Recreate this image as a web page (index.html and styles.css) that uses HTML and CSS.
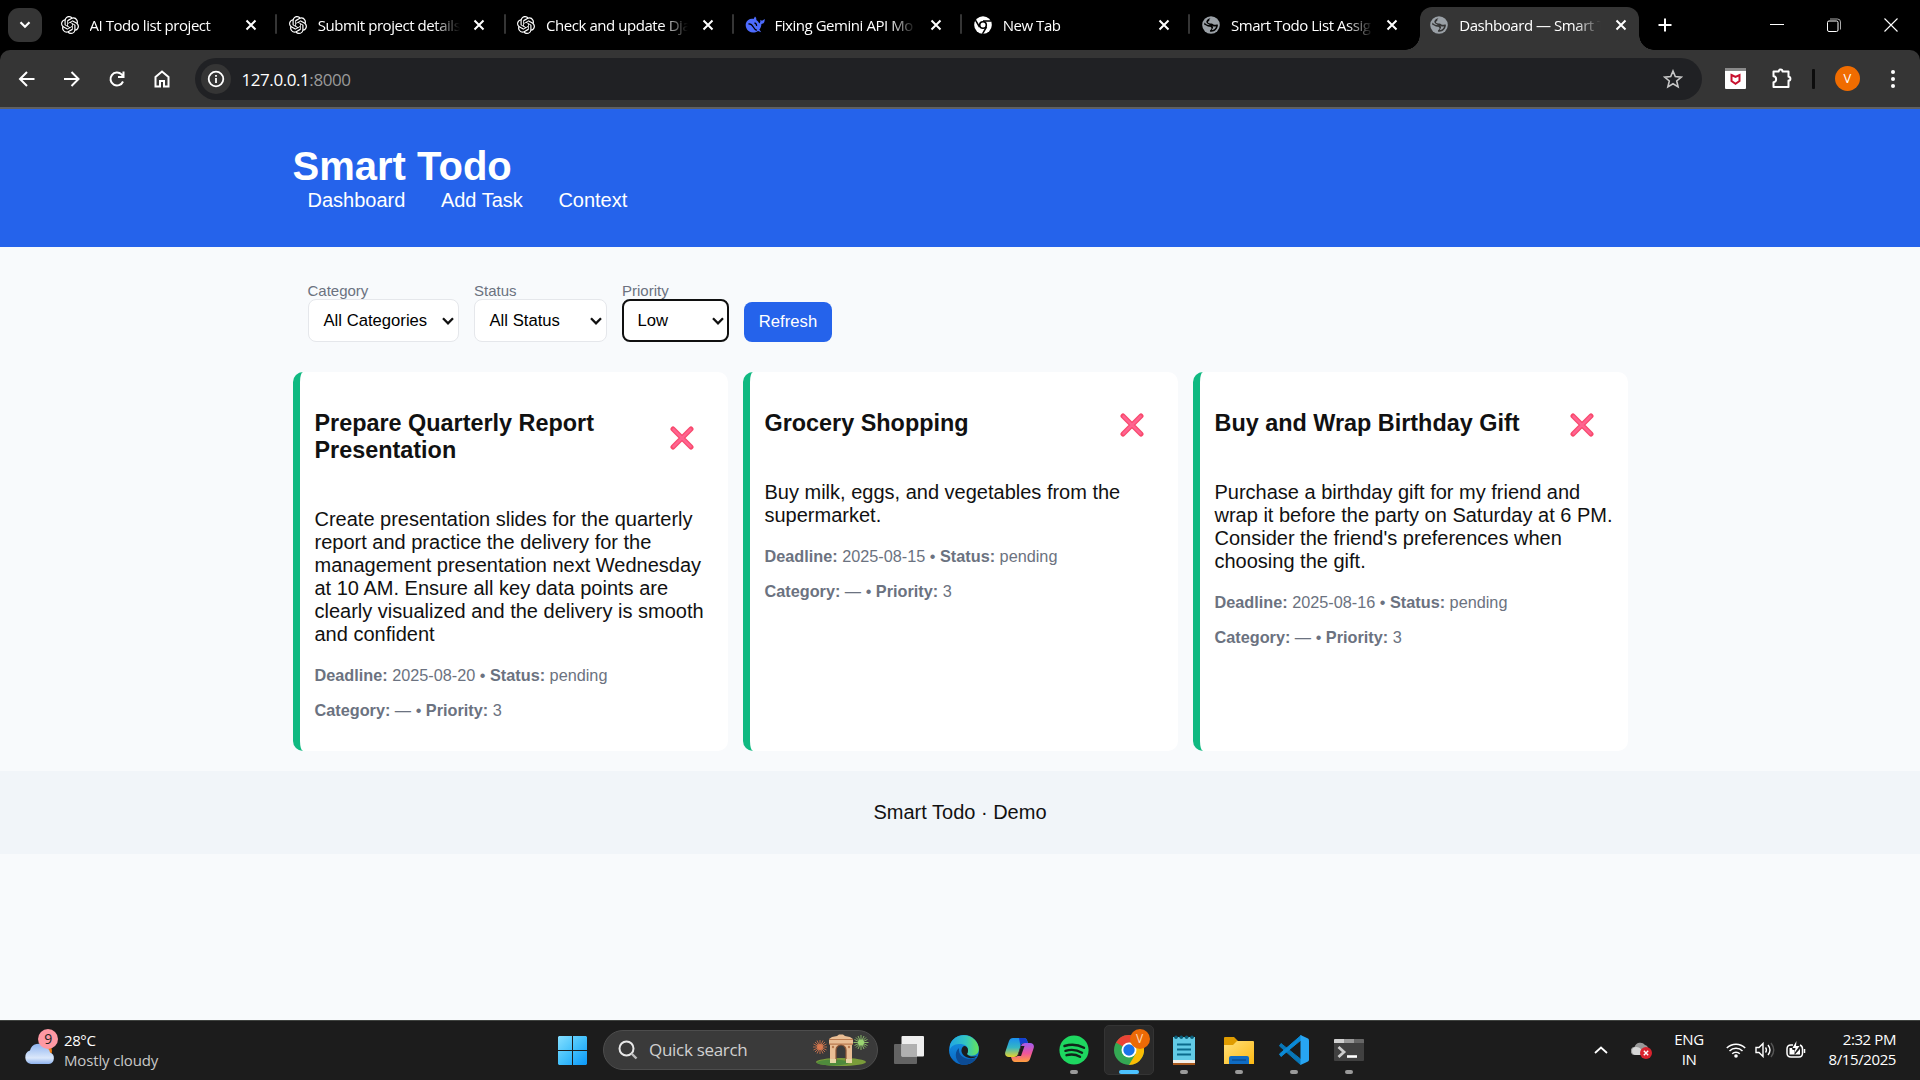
FILE: index.html
```html
<!DOCTYPE html>
<html lang="en">
<head>
<meta charset="utf-8">
<title>Dashboard — Smart Todo</title>
<link rel="stylesheet" href="styles.css">
</head>
<body>
<svg class="defs" aria-hidden="true">
  <symbol id="knot" viewBox="0 0 24 24"><path fill="#fff" d="M22.2819 9.8211a5.9847 5.9847 0 0 0-.5157-4.9108 6.0462 6.0462 0 0 0-6.5098-2.9A6.0651 6.0651 0 0 0 4.9807 4.1818a5.9847 5.9847 0 0 0-3.9977 2.9 6.0462 6.0462 0 0 0 .7427 7.0966 5.98 5.98 0 0 0 .511 4.9107 6.051 6.051 0 0 0 6.5146 2.9001A5.9847 5.9847 0 0 0 13.2599 24a6.0557 6.0557 0 0 0 5.7718-4.2058 5.9894 5.9894 0 0 0 3.9977-2.9001 6.0557 6.0557 0 0 0-.7475-7.0729zm-9.022 12.6081a4.4755 4.4755 0 0 1-2.8764-1.0408l.1419-.0804 4.7783-2.7582a.7948.7948 0 0 0 .3927-.6813v-6.7369l2.02 1.1686a.071.071 0 0 1 .038.052v5.5826a4.504 4.504 0 0 1-4.4945 4.4944zm-9.6607-4.1254a4.4708 4.4708 0 0 1-.5346-3.0137l.142.0852 4.783 2.7582a.7712.7712 0 0 0 .7806 0l5.8428-3.3685v2.3324a.0804.0804 0 0 1-.0332.0615L9.74 19.9502a4.4992 4.4992 0 0 1-6.1408-1.6464zM2.3408 7.8956a4.485 4.485 0 0 1 2.3655-1.9728V11.6a.7664.7664 0 0 0 .3879.6765l5.8144 3.3543-2.0201 1.1685a.0757.0757 0 0 1-.071 0l-4.8303-2.7865A4.504 4.504 0 0 1 2.3408 7.872zm16.5963 3.8558L13.1038 8.364 15.1192 7.2a.0757.0757 0 0 1 .071 0l4.8303 2.7913a4.4944 4.4944 0 0 1-.6765 8.1042v-5.6772a.79.79 0 0 0-.407-.667zm2.0107-3.0231l-.142-.0852-4.7735-2.7818a.7759.7759 0 0 0-.7854 0L9.409 9.2297V6.8974a.0662.0662 0 0 1 .0284-.0615l4.8303-2.7866a4.4992 4.4992 0 0 1 6.6802 4.66zM8.3065 12.863l-2.02-1.1638a.0804.0804 0 0 1-.038-.0567V6.0742a4.4992 4.4992 0 0 1 7.3757-3.4537l-.142.0805L8.704 5.459a.7948.7948 0 0 0-.3927.6813zm1.0976-2.3654l2.602-1.4998 2.6069 1.4998v2.9994l-2.5974 1.4997-2.6067-1.4997Z"/></symbol>
  <symbol id="globe" viewBox="0 0 18 18"><circle cx="9" cy="9" r="8.8" fill="#9aa0a6"/><path fill="var(--hole)" d="M9.500 2c-2 .3-2.200 1-2 2 .1 1-1.500 1-1.500 2.200C6 7.300 8 7.600 9.500 7.600c1.300 0 1.400 1.200 2.700 1.200 1.500 0 2.800-.6 3.700 0 .2 3.600-2.700 7-6.500 7-1 0-1.500-.3-1.500-.9 0-1 1.600-1 1.600-2.400 0-1.200-.8-1.700-2.200-1.700-2 0-2.800-1.800-4.900-1.900C2.100 8.200 2.200 7.400 2.500 6.600 3.700 8.300 5 8.900 6.500 9c2 .1 4.700.6 4.600 2.600-.1 1.200-1.200 1.500-1.200 2.500 2-.3 3.600-1.800 4.300-3.700-2.300.6-3.600-.4-4.700-.9C7.500 8.800 4.300 7.800 4.300 5.500 5 3.500 7 2.100 9.500 2z"/></symbol>
  <symbol id="x" viewBox="0 0 12 12"><path d="M1.500 1.500l9 9M10.500 1.500l-9 9" stroke="#fff" stroke-width="2" fill="none"/></symbol>
  <symbol id="caret" viewBox="0 0 12 8"><path d="M1 1.300l5 5 5-5" stroke="#111" stroke-width="2.300" fill="none"/></symbol>
  <symbol id="cross" viewBox="0 0 24 24"><path d="M3 3l18 18M21 3L3 21" stroke="#f8486b" stroke-width="5" stroke-linecap="round"/><path d="M3.500 3.500l17 17M20.500 3.500l-17 17" stroke="#ff6390" stroke-width="2.600" stroke-linecap="round"/></symbol>
</svg>

<header class="tabs">
  <button class="tab-search"><svg width="12" height="8" viewBox="0 0 12 8"><path d="M1.500 1.200L6 5.700l4.500-4.500" stroke="#fff" stroke-width="2.200" fill="none"/></svg></button>
  <div class="tab"><svg class="fav"><use href="#knot"/></svg><span class="tab-title">AI Todo list project</span><svg class="close"><use href="#x"/></svg></div>
  <div class="tab"><svg class="fav"><use href="#knot"/></svg><span class="tab-title">Submit project details</span><svg class="close"><use href="#x"/></svg></div>
  <div class="tab"><svg class="fav"><use href="#knot"/></svg><span class="tab-title">Check and update Dja</span><svg class="close"><use href="#x"/></svg></div>
  <div class="tab"><svg class="fav wide" viewBox="0 0 20 18"><path fill="#4d6bfe" d="M1 7C2 4 5 2.300 8.500 3L10 .5c1.200 1 1.500 2.300 1.300 3.600 1.400.9 2.300 2.200 3 3.400 1-.8 1.300-2 .9-3.700 1 .9 1.900.9 2.400.7L19.700 3c.2 2.600-.8 4.600-3.300 5-.1 2.400-.9 4.200-2 5.500l1.800 2.800-3.200-1.300C8.600 17.900 3 16.500 1.300 12 .6 10.300.5 8.500 1 7z"/><path d="M3.500 8c2.500-.3 3.800 1.200 4.800 3 1 1.800 2 2.800 3.500 3.400" stroke="#000" stroke-width="1.300" fill="none"/><path d="M9.500 7c1.500.3 2.300 1.600 2 3" stroke="#000" stroke-width="1.300" fill="none"/></svg><span class="tab-title">Fixing Gemini API Mo</span><svg class="close"><use href="#x"/></svg></div>
  <div class="tab"><svg class="fav" viewBox="0 0 18 18"><circle cx="9" cy="9" r="8.800" fill="#fff"/><circle cx="9" cy="9" r="3.300" fill="#fff" stroke="#000" stroke-width="1.600"/><path d="M9 5h8M5.500 11L1.500 4.200M12.500 11l-4 6.800" stroke="#000" stroke-width="1.500"/></svg><span class="tab-title">New Tab</span><svg class="close"><use href="#x"/></svg></div>
  <div class="tab"><svg class="fav"><use href="#globe"/></svg><span class="tab-title">Smart Todo List Assig</span><svg class="close"><use href="#x"/></svg></div>
  <div class="tab active"><svg class="fav"><use href="#globe"/></svg><span class="tab-title">Dashboard — Smart T</span><svg class="close"><use href="#x"/></svg></div>
  <svg class="plus" width="14" height="14" viewBox="0 0 14 14"><path d="M7 .5v13M.5 7h13" stroke="#fff" stroke-width="2"/></svg>
  <div class="window-buttons">
    <svg width="14" height="14" viewBox="0 0 14 14"><path d="M0 6.500h14" stroke="#fff"/></svg>
    <svg width="14" height="14" viewBox="0 0 14 14"><rect x=".5" y="3" width="10.500" height="10.500" rx="1.500" fill="none" stroke="#fff"/><path d="M3 1h7.500a3 3 0 0 1 3 3v7.500" fill="none" stroke="#aaa"/></svg>
    <svg width="14" height="14" viewBox="0 0 14 14"><path d="M.5.5l13 13M13.500.5l-13 13" stroke="#fff" stroke-width="1.100"/></svg>
  </div>
</header>

<div class="toolbar">
  <div class="nav-buttons">
    <svg width="18" height="18" viewBox="0 0 18 18"><path d="M16.500 9H2M9 2L2 9l7 7"/></svg>
    <svg width="18" height="18" viewBox="0 0 18 18"><path d="M1 9h14.500M8.500 2l7 7-7 7"/></svg>
    <svg width="18" height="18" viewBox="0 0 18 18"><path d="M15 11.500A6.500 6.500 0 1 1 13.600 4.400L15 6M15.500 1.500v5.500h-5.500"/></svg>
    <svg width="18" height="18" viewBox="0 0 18 18"><path d="M2.500 16.500V7L9 1.500 15.500 7v9.500H11v-5.500H7v5.500z"/></svg>
  </div>
  <div class="address">
    <span class="info"><svg width="18" height="18" viewBox="0 0 18 18"><circle cx="9" cy="9" r="7.300" fill="none" stroke="#fff" stroke-width="1.800"/><path d="M9 8v5M9 5v1.800" stroke="#fff" stroke-width="1.800"/></svg></span>
    <span class="url">127.0.0.1<span class="port">:8000</span></span>
    <svg class="star" width="20" height="20" viewBox="0 0 20 20"><path d="M10 2l2.300 5.600 6 .5-4.600 3.900 1.400 5.900-5.100-3.200-5.100 3.200 1.400-5.900L1.700 8.100l6-.5z" fill="none" stroke="#c7c7c7" stroke-width="1.600"/></svg>
  </div>
  <svg class="shield" width="21" height="21" viewBox="0 0 21 21"><rect width="21" height="21" rx="1" fill="#fff"/><rect width="21" height="3" fill="#8a8a8a"/><path d="M6.500 7l4 2 4-2v6l-4 2.800-4-2.800z" fill="none" stroke="#c8102e" stroke-width="2"/></svg>
  <svg class="puzzle" width="22" height="22" viewBox="0 0 22 22"><path d="M2.500 4.500h5.200a1.900 1.900 0 0 1 3.800 0H17.500v5.300a1.900 1.900 0 0 1 0 3.800V20H2.500v-4.800c3.500-.3 3.500-5.600 0-5.900z" fill="none" stroke="#fff" stroke-width="2" stroke-linejoin="round"/></svg>
  <span class="divider"></span>
  <span class="avatar">V</span>
  <svg class="dots" width="6" height="18" viewBox="0 0 6 18"><circle cx="3" cy="2" r="2" fill="#fff"/><circle cx="3" cy="9" r="2" fill="#fff"/><circle cx="3" cy="16" r="2" fill="#fff"/></svg>
</div>

<div class="page">
  <header class="site-header">
    <div class="container">
      <h1>Smart Todo</h1>
      <nav><a>Dashboard</a> <a>Add Task</a> <a>Context</a></nav>
    </div>
  </header>
  <main class="container">
    <div class="filters">
      <div class="field"><label>Category</label><div class="select category">All Categories<svg class="caret"><use href="#caret"/></svg></div></div>
      <div class="field"><label>Status</label><div class="select status">All Status<svg class="caret"><use href="#caret"/></svg></div></div>
      <div class="field"><label>Priority</label><div class="select priority focused">Low<svg class="caret"><use href="#caret"/></svg></div></div>
      <button class="refresh">Refresh</button>
    </div>
    <div class="cards">
      <article class="card">
        <div class="card-head"><h3>Prepare Quarterly Report Presentation</h3><svg class="delete"><use href="#cross"/></svg></div>
        <p>Create presentation slides for the quarterly report and practice the delivery for the management presentation next Wednesday at 10 AM. Ensure all key data points are clearly visualized and the delivery is smooth and confident</p>
        <p class="meta"><b>Deadline:</b> 2025-08-20 • <b>Status:</b> pending</p>
        <p class="meta"><b>Category:</b> — • <b>Priority:</b> 3</p>
      </article>
      <article class="card">
        <div class="card-head"><h3>Grocery Shopping</h3><svg class="delete"><use href="#cross"/></svg></div>
        <p>Buy milk, eggs, and vegetables from the supermarket.</p>
        <p class="meta"><b>Deadline:</b> 2025-08-15 • <b>Status:</b> pending</p>
        <p class="meta"><b>Category:</b> — • <b>Priority:</b> 3</p>
      </article>
      <article class="card">
        <div class="card-head"><h3>Buy and Wrap Birthday Gift</h3><svg class="delete"><use href="#cross"/></svg></div>
        <p>Purchase a birthday gift for my friend and wrap it before the party on Saturday at 6 PM. Consider the friend's preferences when choosing the gift.</p>
        <p class="meta"><b>Deadline:</b> 2025-08-16 • <b>Status:</b> pending</p>
        <p class="meta"><b>Category:</b> — • <b>Priority:</b> 3</p>
      </article>
    </div>
  </main>
  <footer class="site-footer">Smart Todo · Demo</footer>
</div>

<div class="taskbar">
  <div class="weather">
    <svg width="34" height="40" viewBox="0 0 34 40">
      <defs><linearGradient id="cl" x1="0" y1="0" x2="0" y2="1"><stop offset="0" stop-color="#8fb4f0"/><stop offset=".7" stop-color="#dbe8fb"/><stop offset="1" stop-color="#8db2ee"/></linearGradient></defs>
      <circle cx="20" cy="23" r="8" fill="#f07c12"/>
      <path d="M7 36a7 7 0 0 1-1-13.500A8.500 8.500 0 0 1 21 19a7 7 0 0 1 5 5.500A6 6 0 0 1 25 36z" fill="url(#cl)"/>
      <circle cx="24" cy="11" r="10" fill="#ff99a4"/><text x="24" y="16" text-anchor="middle" class="badge-text">9</text>
    </svg>
    <div class="weather-text"><div>28°C</div><div class="sub">Mostly cloudy</div></div>
  </div>
  <div class="task start"><svg width="29" height="29" viewBox="0 0 29 29"><defs><linearGradient id="win" x1="0" y1="0" x2="1" y2="1"><stop offset="0" stop-color="#85dfff"/><stop offset=".5" stop-color="#42c0fb"/><stop offset="1" stop-color="#0a97f8"/></linearGradient></defs><path fill="url(#win)" d="M1 0h13v14H0V1zM15 0h13l1 1v13H15zM0 15h14v14H1l-1-1zM15 15h14v13l-1 1H15z"/></svg></div>
  <div class="search">
    <svg width="20" height="20" viewBox="0 0 20 20"><circle cx="8.500" cy="8.500" r="7" fill="none" stroke="#e8e8e8" stroke-width="2"/><path d="M13.500 13.500l5 5" stroke="#bbb" stroke-width="2.400"/></svg>
    <span>Quick search</span>
    <svg class="gate" width="56" height="32" viewBox="0 0 56 32">
      <ellipse cx="28" cy="28" rx="25" ry="4" fill="#7a9c3a"/><ellipse cx="20" cy="28.500" rx="16" ry="3" fill="#4f8a3c"/>
      <g stroke="#d9794f" stroke-width=".8"><path d="M7 6v14M0 13h14M2 8l10 10M12 8L2 18M4 6.500l6 13M10 6.500l-6 13M.5 10l13 6M.5 16l13-6"/></g><circle cx="7" cy="13" r="3" fill="#d9794f"/>
      <g stroke="#9ad672" stroke-width=".8"><path d="M48 1v15M40.500 8.500h15M43 3.500l10 10M53 3.500l-10 10M45 2l6 13M51 2l-6 13M41.500 5.500l13 6M41.500 11.500l13-6"/></g><circle cx="48" cy="8.500" r="3" fill="#9ad672"/>
      <path d="M16 5l3-2 5-1 2-1.500h4L32 2l5 1 3 2v5h-1v18h-6V16a5 5 0 0 0-10 0v12h-6V10h-1z" fill="#e9bd94"/>
      <path d="M16 5h24v1H16zM16 9.500h24v1.200H16z" fill="#b9794e"/><path d="M23 27V16a5 5 0 0 1 10 0v11" fill="none" stroke="#8e5636" stroke-width="1.200"/><path d="M17 25h6v4h-6zM33 25h6v4h-6z" fill="#e7d5a5"/><circle cx="20" cy="13" r="1.200" fill="#b9794e"/><circle cx="36" cy="13" r="1.200" fill="#b9794e"/>
    </svg>
  </div>
  <div class="task"><svg width="30" height="28" viewBox="0 0 30 28"><rect y="8" width="23" height="20" rx="1" fill="#636363"/><rect x="7.500" width="22.500" height="20.500" rx="1" fill="#eee"/><path d="M7.500 8H23v12.500H7.500z" fill="#b0b0b0"/></svg></div>
  <div class="task"><svg width="30" height="30" viewBox="0 0 30 30"><defs><linearGradient id="e1" x1="0" y1="0" x2="1" y2="0"><stop offset="0" stop-color="#21a6e4"/><stop offset=".55" stop-color="#33c6c0"/><stop offset="1" stop-color="#66e558"/></linearGradient><linearGradient id="e2" x1="0" y1="0" x2="0" y2="1"><stop offset="0" stop-color="#1598e8"/><stop offset="1" stop-color="#0a66c2"/></linearGradient></defs><circle cx="15" cy="15" r="15" fill="url(#e2)"/><path d="M1 10C4-1 19-3 26 5c5 6 5 13 0 15-3 1.300-7 .7-8-1-.5-1 1-1.500 1-4 0-4-4-6-8-6-4 0-8 1-10 5z" fill="url(#e1)"/><path d="M10 13c-1 8 6 13 17 10-3 5-8 7-13 7-7-2-10-12-4-17z" fill="#0c4b94"/><path d="M15 11c-4 2-4 10 5 12 3 .5 6 0 8-2-5 1.500-9 0-10-2 .8-1 1-2 1-4 0-2-1.500-4-4-4z" fill="#1c1c1c"/></svg></div>
  <div class="task"><svg width="29" height="26" viewBox="0 0 29 26"><defs><linearGradient id="c1" x1="0" y1="0" x2="0" y2="1"><stop offset="0" stop-color="#1a8ff0"/><stop offset=".5" stop-color="#35b6c4"/><stop offset="1" stop-color="#e8d32c"/></linearGradient><linearGradient id="c2" x1="0" y1="0" x2="0" y2="1"><stop offset="0" stop-color="#a05bf0"/><stop offset=".55" stop-color="#f0569a"/><stop offset="1" stop-color="#ffa03c"/></linearGradient></defs><path d="M8 1h11c2 0 3 1.500 3.300 3l.7 2h-4c-2 0-3 1-3.500 3L13 17c-.7 2-2 3-4 3H4c-3 0-4.500-2-3.700-5L4 4c.8-2 2-3 4-3z" fill="url(#c1)"/><path d="M14 1h5c2 0 3 1.500 3.300 3l.7 2h-4c-2 0-3 1-3.500 3z" fill="#1440d0"/><path d="M21 25H10c-2 0-3-1.500-3.300-3L6 20h4c2 0 3-1 3.500-3L16 9c.7-2 2-3 4-3h5c3 0 4.500 2 3.700 5L25 22c-.8 2-2 3-4 3z" fill="url(#c2)"/><path d="M16 9h3.500L16 19h-3.200z" fill="#1c1c1c"/></svg></div>
  <div class="task"><svg width="30" height="30" viewBox="0 0 30 30"><circle cx="15" cy="15" r="14.600" fill="#1ed760"/><path d="M5.500 11c6-2 13.500-1.500 19.500 1.800M6.500 15.800c5.500-1.600 11.500-1 16.500 1.900M7.500 20.200c4.500-1.200 9.500-.8 13.500 1.600" fill="none" stroke="#10251a" stroke-width="2.400" stroke-linecap="round"/></svg><i class="dot"></i></div>
  <div class="task current"><svg width="30" height="30" viewBox="0 0 30 30"><circle cx="15" cy="15" r="15" fill="#34a853"/><path d="M15 15L2 7.500A15 15 0 0 1 28 7.500H15z" fill="#ea4335"/><path d="M15 7.500h13A15 15 0 0 1 15 30l6.500-11z" fill="#fbbc04"/><circle cx="15" cy="15" r="7.500" fill="#fff"/><circle cx="15" cy="15" r="5.700" fill="#1a73e8"/></svg><span class="profile">V</span><i class="dot bar"></i></div>
  <div class="task"><svg width="22" height="30" viewBox="0 0 22 30"><path d="M0 2h22v24H0z" fill="#62cbe6"/><path d="M0 25h22v3H0z" fill="#f3efe8"/><path d="M0 28h22v2H0z" fill="#a8581c"/><path d="M4 9.500h14M4 14.500h14M4 19.500h14" stroke="#0a6b8c" stroke-width="1.800"/><g fill="#0b5f7a"><circle cx="3" cy="2.200" r="1.800"/><circle cx="8.300" cy="2.200" r="1.800"/><circle cx="13.600" cy="2.200" r="1.800"/><circle cx="19" cy="2.200" r="1.800"/></g></svg><i class="dot"></i></div>
  <div class="task"><svg width="30" height="27" viewBox="0 0 30 27"><defs><linearGradient id="fo" x1="0" y1="0" x2="1" y2="1"><stop offset="0" stop-color="#ffe07a"/><stop offset="1" stop-color="#fdb913"/></linearGradient></defs><path d="M0 1q0-1 1-1h9l4 4H26v4H0z" fill="#e09c00"/><path d="M0 8h9l4-4h16q1 0 1 1v22H0z" fill="url(#fo)"/><path d="M5 27v-6q0-2 2-2h16q2 0 2 2v6z" fill="#0f6cc4"/><path d="M8 23h14" stroke="#0a4a8c" stroke-width="1.300"/></svg><i class="dot"></i></div>
  <div class="task"><svg width="30" height="30" viewBox="0 0 30 30"><path d="M2 8.500L21.500 24v5.500L0.500 11z" fill="#0877b9" stroke="#0877b9" stroke-linejoin="round"/><path d="M2 21.500L22 5V.5L.5 19z" fill="#0b8ad6" stroke="#0b8ad6" stroke-linejoin="round"/><path d="M21.500 0L29 3.500q1 .5 1 2v19q0 1.500-1 2L21.500 30z" fill="#27a5f2"/></svg><i class="dot"></i></div>
  <div class="task"><svg width="30" height="22" viewBox="0 0 30 22"><rect width="30" height="22" rx="1" fill="#404040"/><path d="M0 4V1q0-1 1-1h9v4z" fill="#d0d0d0"/><path d="M10 0h10v4H10z" fill="#999"/><path d="M20 0h9q1 0 1 1v3H20z" fill="#666"/><path d="M4.500 8l5.500 5-5.500 5" fill="none" stroke="#ccc" stroke-width="2.800"/><path d="M13 17.500h10" stroke="#fff" stroke-width="2.600"/></svg><i class="dot"></i></div>
  <div class="tray">
    <svg class="t-chev" width="14" height="8" viewBox="0 0 14 8"><path d="M1 7l6-5.500L13 7" fill="none" stroke="#fff" stroke-width="1.800"/></svg>
    <svg class="t-cloud" width="21" height="17" viewBox="0 0 21 17"><path d="M4 13a4 4 0 0 1-.5-8A6 6 0 0 1 14 3a4 4 0 0 1 3 4v6z" fill="#999"/><path d="M5 13a4 4 0 0 1 0-8 6 6 0 0 1 6 8z" fill="#d6d6d6"/><circle cx="15" cy="11" r="6" fill="#d9232e"/><path d="M12.800 8.800l4.400 4.400M17.200 8.800l-4.400 4.400" stroke="#fff" stroke-width="1.400"/></svg>
    <div class="lang"><div>ENG</div><div>IN</div></div>
    <svg class="t-wifi" width="20" height="16" viewBox="0 0 20 16"><g fill="none" stroke="#fff" stroke-width="1.500"><path d="M.8 6a13 13 0 0 1 18.400 0M3.500 9a9.200 9.200 0 0 1 13 0M6.200 11.800a5.400 5.400 0 0 1 7.600 0"/></g><circle cx="10" cy="14" r="1.800" fill="#fff"/></svg>
    <svg class="t-vol" width="20" height="16" viewBox="0 0 20 16"><g fill="none" stroke="#fff" stroke-width="1.400"><path d="M1 5.500h3l4-4v13l-4-4H1zM10.500 5.500q1.800 2.500 0 5M13 3q4 5 0 10"/><path d="M16 1q5.500 7 0 14" stroke="#555"/></g></svg>
    <svg class="t-batt" width="20" height="18" viewBox="0 0 20 18"><path d="M7 4H5Q1 4 1 8v4q0 4 4 4h8q3.500 0 3.500-4V8q0-3-2.500-4" fill="none" stroke="#fff" stroke-width="1.500"/><path d="M3.500 7H6l.5 2h2v5l5-5.500.5-1v6H3.500z" fill="#fff"/><path d="M10.500 0L6.500 7h3l-1 5 5-7h-3.500z" fill="#fff"/><path d="M18.500 8v4" stroke="#fff" stroke-width="1.500"/></svg>
    <div class="clock"><div>2:32 PM</div><div>8/15/2025</div></div>
  </div>
</div>
</body>
</html>
```

FILE: styles.css
```css
* { box-sizing: border-box; }
html, body { margin: 0; height: 100%; overflow: hidden; }
body {
  display: flex;
  flex-direction: column;
  width: 1920px;
  height: 1080px;
  background: #f8fafc;
  font-family: "Open Sans", "Noto Sans", sans-serif;
}
button { border: 0; padding: 0; font: inherit; }
svg { display: block; flex: none; }
.defs { position: absolute; width: 0; height: 0; }

/* Browser tabs */
.tabs {
  display: flex;
  align-items: center;
  flex: none;
  height: 50px;
  background: #000;
  color: #fff;
  --hole: #000;
}
.tab-search {
  display: flex;
  align-items: center;
  justify-content: center;
  width: 34px;
  height: 34px;
  margin: 0 6px 0 8px;
  border-radius: 11px;
  background: #353535;
}
.tab {
  position: relative;
  display: flex;
  align-items: center;
  flex: none;
  width: 228.300px;
  height: 50px;
  padding-left: 12.500px;
}
.tab:not(.active)::after {
  content: "";
  position: absolute;
  right: -1px;
  top: 14px;
  width: 2px;
  height: 20px;
  border-radius: 1px;
  background: #353535;
}
.tab:nth-child(7)::after { display: none; }
.fav { width: 18px; height: 18px; }
.fav.wide { width: 20px; margin-right: -2px; }
.tab-title {
  width: 144px;
  margin-left: 11px;
  white-space: nowrap;
  font-size: 15px;
  letter-spacing: -0.45px;
  mask-image: linear-gradient(90deg, #000 116px, transparent 142px);
}
.close { width: 12px; height: 12px; margin-left: 11.500px; }
.tab.active { --hole: #353535; z-index: 0; }
.tab.active::before {
  content: "";
  position: absolute;
  z-index: -1;
  left: 2px;
  right: 7px;
  top: 7px;
  bottom: 0;
  border-radius: 12px 12px 0 0;
  background: #353535;
}
.tab.active::after {
  content: "";
  position: absolute;
  z-index: -1;
  left: -13px;
  right: -8px;
  bottom: 0;
  height: 15px;
  background:
    radial-gradient(circle at 0 0, transparent 14.500px, #353535 15px) left / 15px 15px no-repeat,
    radial-gradient(circle at 100% 0, transparent 14.500px, #353535 15px) right / 15px 15px no-repeat;
}
.plus { margin-left: 11.500px; }
.window-buttons { display: flex; gap: 43px; margin-left: auto; margin-right: 22px; }

/* Toolbar */
.toolbar {
  display: flex;
  align-items: center;
  flex: none;
  height: 59px;
  background: #353535;
  border-bottom: 2px solid #5f6062;
  border-radius: 10px 10px 0 0;
  box-shadow: 0 -10px 0 0 #000;
}
.tabs { position: relative; z-index: 1; }
.nav-buttons { display: flex; gap: 27px; padding-left: 18px; width: 195px; }
.nav-buttons path { fill: none; stroke: #fff; stroke-width: 2; }
.address {
  display: flex;
  align-items: center;
  width: 1507px;
  height: 42px;
  padding: 0 19.500px 0 6px;
  border-radius: 21px;
  background: #202124;
}
.info {
  display: flex;
  align-items: center;
  justify-content: center;
  width: 30px;
  height: 30px;
  border-radius: 50%;
  background: #353535;
}
.url { margin-left: 10.500px; padding-top: 1px; font-size: 17px; letter-spacing: -0.430px; color: #fff; }
.port { color: #9a9a9a; }
.star { margin-left: auto; }
.shield { margin-left: 23px; }
.puzzle { margin-left: 25px; margin-top: -1px; }
.divider { width: 3px; height: 20px; margin-left: 19px; background: #0c0c0c; border-radius: 1px; }
.avatar {
  width: 25px;
  height: 25px;
  margin-left: 20px;
  border-radius: 50%;
  background: #f06c00;
  color: #fff;
  font-size: 13px;
  line-height: 25px;
  text-align: center;
}
.dots { margin-left: 29.500px; }

/* Page */
.page {
  flex: 1;
  background: #f8fafc;
  color: #111;
  font-family: "Liberation Sans", Arial, sans-serif;
  font-size: 20px;
  line-height: 23px;
}
.container { width: 1375px; margin: 0 auto; padding: 0 20px; }
.site-header { height: 138px; padding-top: 34px; background: #2563eb; color: #fff; }
.site-header h1 { margin: 0; font-size: 40px; line-height: 46px; }
.site-header a { margin: 0 15px; }
.filters { display: flex; align-items: flex-end; gap: 15px; padding: 35px 15px 30px; }
.field { display: flex; flex-direction: column; }
.field label { font-size: 15px; line-height: 17px; color: #6b7280; }
.select {
  display: flex;
  align-items: center;
  justify-content: space-between;
  height: 43px;
  padding: 0 4px 0 15px;
  border: 1px solid #e5e7eb;
  border-radius: 8px;
  background: #fff;
  color: #000;
  font-size: 16.670px;
}
.category { width: 151.500px; }
.status { width: 133px; padding-left: 14.500px; }
.priority { width: 107px; }
.select.focused { padding: 0 3px 0 13.500px; border: 2px solid #101010; }
.caret { width: 12px; height: 8px; }
.refresh {
  width: 88px;
  height: 40px;
  padding-bottom: 2px;
  border-radius: 8px;
  background: #2563eb;
  color: #fff;
  font-size: 16.670px;
}
.cards { display: grid; grid-template-columns: repeat(3, 1fr); gap: 15px; }
.card {
  padding: 15px;
  min-height: 379px;
  border-left: 7.500px solid #10b981;
  border-radius: 10px;
  background: #fff;
}
.card-head { display: flex; align-items: center; justify-content: space-between; }
.card h3 { margin: 23.400px 0; font-size: 23.400px; line-height: 27px; }
.card p { margin: 20px 0; }
.card p.meta { margin: 16.250px 0; font-size: 16.250px; line-height: 18.750px; color: #6b7280; }
.card p:not(.meta) + .meta { margin-top: 20px; }
.delete { width: 24px; height: 24px; margin: 2px 18.500px 0 0; }
.site-footer { height: 83px; margin-top: 20px; line-height: 82px; text-align: center; background: #f1f5f9; }

/* Taskbar */
.taskbar {
  display: flex;
  align-items: center;
  flex: none;
  height: 60px;
  padding-bottom: 1px;
  border-top: 1px solid #3f423f;
  background: #1c1c1c;
  color: #fff;
  font-size: 15px;
  line-height: 20px;
  letter-spacing: -0.4px;
}
.weather { display: flex; width: 545px; padding-left: 24px; gap: 6px; }
.weather svg { margin-top: -3px; }
.weather-text { margin-top: -1px; }
.sub { color: #c8c8c8; letter-spacing: -0.15px; }
.badge-text { font-size: 14px; fill: #222; }
.task { position: relative; display: flex; align-items: center; justify-content: center; width: 55px; height: 50px; flex: none; }
.search {
  display: flex;
  align-items: center;
  width: 275px;
  height: 40px;
  margin: 0 3.500px 0 3px;
  padding: 0 8px 0 14px;
  border: 1px solid #4d4d4d;
  border-radius: 20px;
  background: #3a3a3a;
  color: #d0d0d0;
  font-size: 17px;
  letter-spacing: -0.3px;
}
.search span { margin-left: 11px; }
.gate { margin-left: auto; }
.current::before {
  content: "";
  position: absolute;
  z-index: 0;
  inset: 0 2.500px;
  border: 1px solid #343434;
  border-radius: 5px;
  background: #2a2a2a;
}
.current svg { position: relative; }
.profile {
  position: absolute;
  left: 28px;
  top: 4px;
  width: 20px;
  height: 20px;
  border-radius: 50%;
  background: #ec6a06;
  color: #ffd9b8;
  font-size: 12px;
  text-align: center;
}
.dot { position: absolute; left: 23.500px; bottom: 1px; width: 8px; height: 4px; border-radius: 2px; background: #9a9a9a; }
.dot.bar { left: 17.500px; width: 20px; background: #4cc2ff; }
.tray { display: flex; align-items: center; margin-left: auto; padding-right: 24px; }
.t-cloud { margin-left: 23px; }
.lang { width: 40px; margin: -2px 0 0 17px; text-align: center; }
.t-wifi { margin-left: 17px; }
.t-vol { margin-left: 9px; }
.t-batt { margin-left: 11px; }
.clock { width: 80px; margin: -3px 0 0 10px; text-align: right; }
```
